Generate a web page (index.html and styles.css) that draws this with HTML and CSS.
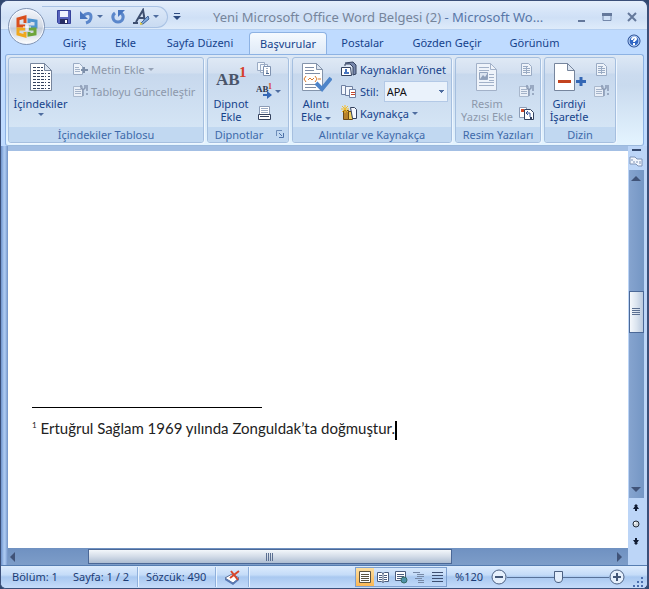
FILE: index.html
```
<!DOCTYPE html>
<html lang="tr">
<head>
    <meta charset="utf-8">
    <title>Yeni Microsoft Office Word Belgesi (2) - Microsoft Word</title>
    <link rel="stylesheet" href="styles.css">
</head>
<body>

<!-- shapes used more than once -->
<svg class="defs" aria-hidden="true">
    <symbol id="doc-small" viewBox="0 0 16 16">
        <path d="M3.500 2.500h7l3 3v9h-10z" fill="#eef3fa" stroke="#9aabc4"/>
        <path d="M5 5.500h5M5 7.500h7M5 9.500h7M5 11.500h7M8.500 5v8" stroke="#9aabc4"/>
    </symbol>
    <symbol id="doc-update" viewBox="0 0 16 16">
        <path d="M1.500 3.500h9v10h-9z" fill="#e9eff8" stroke="#a9b8cd"/>
        <path d="M3 6.500h6M3 8.500h6M3 10.500h6" stroke="#a4b3c9"/>
        <path d="M9 2v3l2 2v6M13 2v3l-2 2" fill="none" stroke="#8999b3" stroke-width="1.500"/>
        <path d="M15 2v6M15 10v2" stroke="#8999b3" stroke-width="1.500"/>
    </symbol>
</svg>

<div class="window">
    <header class="titlebar">
        <button class="office" aria-label="Office Düğmesi">
            <svg viewBox="0 0 24 24" width="24" height="24" fill="none" stroke-width="3">
                <path d="M10 11H3V4l7-2v6" stroke="#d94f1c"/>
                <path d="M14 8V5l7 1v6h-7" stroke="#4f94cf"/>
                <path d="M10 14H3v5l7 2v-4" stroke="#f0a81d"/>
                <path d="M14 17v3l6-1v-5h-6" stroke="#6da53a"/>
                <path d="M12 9v7M8 12h8" stroke="#fff" stroke-width="1"/>
            </svg>
        </button>
        <div class="quick">
            <button aria-label="Kaydet">
                <svg viewBox="0 0 16 16" width="16" height="16">
                    <path d="M1.500 1.500h13v13h-12l-1-1z" fill="#5763bd" stroke="#36429a"/>
                    <path d="M4 2h8v6H4z" fill="#eef3ff"/>
                    <path d="M4 10h8v5H4z" fill="#272d63"/>
                    <path d="M9 11h2v3H9z" fill="#fff"/>
                </svg>
            </button>
            <button aria-label="Geri Al">
                <svg viewBox="0 0 16 16" width="16" height="16">
                    <path d="M5 7c4-4 8-3 8 1 0 3-2 5-5 6" fill="none" stroke="#5b87cb" stroke-width="3"/>
                    <path d="M2 2v8h8z" fill="#4775bf"/>
                </svg>
            </button>
            <i class="arrow"></i>
            <button class="redo" aria-label="Yinele">
                <svg viewBox="0 0 16 16" width="16" height="16">
                    <path d="M11 4c4 3 2 9-3 9s-7-6-3-9" fill="none" stroke="#5b87cb" stroke-width="3"/>
                    <path d="M8 1h7L8 8z" fill="#4775bf"/>
                </svg>
            </button>
            <button class="styles" aria-label="Stiller">
                <svg viewBox="0 0 18 18" width="18" height="18">
                    <path d="M1 15h5M4 14L11 2l2 12M6 10h6" fill="none" stroke="#3e4f70" stroke-width="2"/>
                    <path d="M8 16l8-8 1 3-6 5z" fill="#7da6d9" stroke="#40649b"/>
                    <path d="M8 14l3 2-3 1z" fill="#e6cf4a"/>
                </svg>
            </button>
            <i class="arrow"></i>
        </div>
        <button class="customize" aria-label="Araç Çubuğunu Özelleştir">
            <svg viewBox="0 0 8 8" width="8" height="8"><path d="M1 0h6v1H1zM0 3h8L4 7z" fill="#2c4a80"/></svg>
        </button>
        <h1><span>Yeni Microsoft Office Word Belgesi (2)</span> - Microsoft Wo...</h1>
        <div class="controls">
            <button aria-label="Simge Durumuna Küçült"><svg viewBox="0 0 10 10" width="10" height="10"><path d="M1 8h7v2H1z" fill="#64789b"/></svg></button>
            <button aria-label="Ekranı Kapla"><svg viewBox="0 0 10 10" width="10" height="10"><path d="M1 2.500h8v6H1z" fill="none" stroke="#7589ab"/><path d="M0 1h10v3H0z" fill="#64789b"/></svg></button>
            <button aria-label="Kapat"><svg viewBox="0 0 10 10" width="10" height="10"><path d="M1 1l8 8M9 1L1 9" stroke="#64789b" stroke-width="2"/></svg></button>
        </div>
    </header>

    <nav class="tabs">
        <button>Giriş</button>
        <button>Ekle</button>
        <button>Sayfa Düzeni</button>
        <button class="active">Başvurular</button>
        <button>Postalar</button>
        <button>Gözden Geçir</button>
        <button>Görünüm</button>
        <button class="help" aria-label="Yardım">
            <svg viewBox="0 0 14 14" width="14" height="14">
                <circle cx="7" cy="7" r="6" fill="#2f66c4" stroke="#25488c"/>
                <circle cx="7" cy="7" r="5" fill="none" stroke="#cfe2fb"/>
                <path d="M5 6c0-3 4-3 4-1 0 1-2 1-2 3M7 9v2" fill="none" stroke="#fff" stroke-width="2"/>
            </svg>
        </button>
    </nav>

    <div class="ribbon">
        <section class="group toc">
            <div class="tools">
                <button class="big">
                    <svg viewBox="0 0 24 30" width="24" height="30">
                        <path d="M1.500 1.500h14l7 7v20h-21z" fill="#fff" stroke="#76859d"/>
                        <path d="M15.500 1.500v7h7z" fill="#dce5f1" stroke="#76859d"/>
                        <path d="M4 5.500h10M4 8.500h10M4 11.500h13M4 14.500h13M4 17.500h13M4 20.500h13M4 23.500h13M4 26.500h13" stroke="#35435f" stroke-dasharray="3 1"/>
                        <path d="M19 11.500h2M19 14.500h2M19 17.500h2M19 20.500h2M19 23.500h2M19 26.500h2" stroke="#35435f"/>
                    </svg>
                    <span>İçindekiler</span>
                    <i class="arrow"></i>
                </button>
                <div class="stack">
                    <button disabled>
                        <svg viewBox="0 0 16 16" width="16" height="16">
                            <path d="M1.500 2.500h6l3 3v8h-9z" fill="#eef3fa" stroke="#9aabc4"/>
                            <path d="M3 6.500h4M3 8.500h5M3 10.500h5" stroke="#a4b3c9"/>
                            <path d="M9 9h7M12 6v6M11 8v2" stroke="#7d8faa" stroke-width="2"/>
                        </svg>
                        Metin Ekle <i class="arrow"></i>
                    </button>
                    <button disabled><svg width="16" height="16"><use href="#doc-update"/></svg>Tabloyu Güncelleştir</button>
                </div>
            </div>
            <h2>İçindekiler Tablosu</h2>
        </section>

        <section class="group notes">
            <div class="tools">
                <button class="big">
                    <svg viewBox="0 0 32 30" width="32" height="30">
                        <text x="1" y="23" class="ab">AB</text>
                        <text x="24" y="15" class="one">1</text>
                    </svg>
                    <span>Dipnot<br>Ekle</span>
                </button>
                <div class="stack">
                    <button aria-label="Sonnot Ekle">
                        <svg viewBox="0 0 16 16" width="16" height="16">
                            <path d="M1.500 1.500h7v8h-7zM4.500 3.500h7v8h-7z" fill="#f4f8fd" stroke="#9aabc4"/>
                            <path d="M7.500 5.500h7v9h-7z" fill="#fff" stroke="#7f92b0"/>
                            <path d="M11 7v1M11 9v4M10 12.500h3" stroke="#4a668f"/>
                        </svg>
                    </button>
                    <button aria-label="Sonraki Dipnot">
                        <svg viewBox="0 0 16 16" width="16" height="16">
                            <text x="0" y="9" class="ab-small">AB</text>
                            <text x="12" y="6" class="one-small">1</text>
                            <path d="M7 11h4V8l5 4-5 4v-3H7z" fill="#3467b5"/>
                        </svg>
                        <i class="arrow"></i>
                    </button>
                    <button aria-label="Notları Göster">
                        <svg viewBox="0 0 16 16" width="16" height="16">
                            <path d="M3.500 1.500h10v8h-10z" fill="#fff" stroke="#8b9cb6"/>
                            <path d="M2.500 9.500h12v5h-12z" fill="#fff" stroke="#35435f"/>
                            <path d="M5 3.500h7M5 5.500h7M5 7.500h7" stroke="#9aabc4"/>
                            <path d="M4 11.500h9" stroke="#35435f"/>
                        </svg>
                    </button>
                </div>
            </div>
            <h2>Dipnotlar
                <button class="launcher" aria-label="Dipnot ve Sonnot">
                    <svg viewBox="0 0 8 8" width="8" height="8"><path d="M.5 6V.5H6" fill="none" stroke="#6d8db9"/><path d="M3 3l3 3M7.500 3v4.500H3" fill="none" stroke="#4c71a8"/></svg>
                </button>
            </h2>
        </section>

        <section class="group cites">
            <div class="tools">
                <button class="big">
                    <svg viewBox="0 0 32 30" width="32" height="30">
                        <path d="M2.500 1.500h14l6 6v21h-20z" fill="#fff" stroke="#8494ab"/>
                        <path d="M16.500 1.500v6h6z" fill="#dce5f1" stroke="#8494ab"/>
                        <path d="M5 5.500h9M5 8.500h9M5 11.500h15M5 22.500h12M5 25.500h11" stroke="#7e8da6"/>
                        <path d="M6 14l-2 3 2 3M8 18l2-2 2 2 2-2M15 14l2 3-2 3M18 17h3" fill="none" stroke="#d97a2b"/>
                        <path d="M16 21l6 6 9-11" fill="none" stroke="#4d84c9" stroke-width="4"/>
                    </svg>
                    <span>Alıntı<br>Ekle <i class="arrow"></i></span>
                </button>
                <div class="stack">
                    <button>
                        <svg viewBox="0 0 16 16" width="16" height="16">
                            <path d="M4 2l8-1 3 3v9l-3 1" fill="#7787ab" stroke="#34425f"/>
                            <path d="M4 5V3h5l3 3v8" fill="#dce6f5" stroke="#34425f"/>
                            <path d="M.5 6.500h9l1 8h-10z" fill="#fff" stroke="#34425f"/>
                            <path d="M3 12h5M5 8v4" stroke="#4775bf" stroke-width="2"/>
                        </svg>
                        Kaynakları Yönet
                    </button>
                    <div class="style">
                        <svg viewBox="0 0 16 16" width="16" height="16">
                            <path d="M.5 2.500h4v9h-4zM4.500 3.500h7v9h-7z" fill="#f2f6fc" stroke="#6f80a2"/>
                            <path d="M8.500 6.500h6v8h-6z" fill="#fff" stroke="#6f80a2"/>
                            <path d="M10 9.500h4M10 11.500h4" stroke="#c4472d"/>
                        </svg>
                        <label for="style">Stil:</label>
                        <select id="style"><option>APA</option></select>
                    </div>
                    <button>
                        <svg viewBox="0 0 16 16" width="16" height="16">
                            <path d="M2.500 5.500h5v9h-5z" fill="#b9832c" stroke="#6d4b18"/>
                            <path d="M7.500 6.500h4v8h-4z" fill="#f2cf5b" stroke="#6d4b18"/>
                            <path d="M9.500 2.500h4l2 2v9h-4z" fill="#f5f8ff" stroke="#34425f"/>
                            <path d="M4 0v8M0 4h8M1 1l6 6M7 1L1 7" stroke="#f3bd2b"/>
                        </svg>
                        Kaynakça <i class="arrow"></i>
                    </button>
                </div>
            </div>
            <h2>Alıntılar ve Kaynakça</h2>
        </section>

        <section class="group captions">
            <div class="tools">
                <button class="big" disabled>
                    <svg viewBox="0 0 24 30" width="24" height="30">
                        <path d="M1.500 1.500h14l6 6v21h-20z" fill="#eef3fa" stroke="#a2b1c8"/>
                        <path d="M15.500 1.500v6h6" fill="none" stroke="#a2b1c8"/>
                        <path d="M4 5.500h10M4 8.500h10M4 20.500h15M4 23.500h15M14 12.500h5M14 15.500h5M14 18.500h5" stroke="#a2b1c8"/>
                        <path d="M4.500 10.500h8v7h-8z" fill="#dbe4f0" stroke="#93a4be"/>
                        <path d="M5 17l3-4 2 2 2-3v5z" fill="#8e9fb9"/>
                    </svg>
                    <span>Resim<br>Yazısı Ekle</span>
                </button>
                <div class="stack">
                    <button disabled aria-label="Şekiller Tablosu Ekle"><svg width="16" height="16"><use href="#doc-small"/></svg></button>
                    <button disabled aria-label="Şekil Tablosunu Güncelleştir"><svg width="16" height="16"><use href="#doc-update"/></svg></button>
                    <button aria-label="Çapraz Başvuru">
                        <svg viewBox="0 0 16 16" width="16" height="16">
                            <path d="M1.500 2.500h7v10h-7z" fill="#fff" stroke="#8b9cb6"/>
                            <path d="M6.500 4.500h6l3 3v7h-9z" fill="#fff" stroke="#34425f"/>
                            <path d="M3 4h3v3H3z" fill="#d2492a"/>
                            <path d="M12 12V8H8M10 6L8 8l2 2" fill="none" stroke="#34549a"/>
                            <path d="M12 12h2v2h-2z" fill="#34425f"/>
                        </svg>
                    </button>
                </div>
            </div>
            <h2>Resim Yazıları</h2>
        </section>

        <section class="group index">
            <div class="tools">
                <button class="big">
                    <svg viewBox="0 0 34 30" width="34" height="30">
                        <path d="M2.500 1.500h13l7 7v20h-20z" fill="#fff" stroke="#76859d"/>
                        <path d="M15.500 1.500v7h7z" fill="#dce5f1" stroke="#76859d"/>
                        <path d="M6 18h13v3H6z" fill="#c3431f"/>
                        <path d="M29 15v9M24 19.500h10" stroke="#3467b5" stroke-width="3"/>
                    </svg>
                    <span>Girdiyi<br>İşaretle</span>
                </button>
                <div class="stack">
                    <button disabled aria-label="Dizin Ekle"><svg width="16" height="16"><use href="#doc-small"/></svg></button>
                    <button disabled aria-label="Dizini Güncelleştir"><svg width="16" height="16"><use href="#doc-update"/></svg></button>
                </div>
            </div>
            <h2>Dizin</h2>
        </section>
    </div>

    <main class="workspace">
        <article class="page">
            <hr>
            <p><sup>1</sup> Ertuğrul Sağlam 1969 yılında Zonguldak’ta doğmuştur.<span class="caret"></span></p>
        </article>
        <div class="vscroll">
            <div class="split"></div>
            <button class="ruler" aria-label="Cetvel">
                <svg viewBox="0 0 14 14" width="14" height="14">
                    <path d="M1 3h5l2 2h5v7H9l-2-2H1z" fill="#f2f6fd" stroke="#7e93b6"/>
                    <path d="M3 5v2M5 7v2M8 7v2M11 7v3" stroke="#7e93b6"/>
                </svg>
            </button>
            <div class="track">
                <button aria-label="Yukarı"><svg viewBox="0 0 10 6" width="10" height="6"><path d="M0 6l5-5 5 5z" fill="#405378"/></svg></button>
                <div class="thumb"></div>
                <button aria-label="Aşağı"><svg viewBox="0 0 10 6" width="10" height="6"><path d="M0 0l5 5 5-5z" fill="#405378"/></svg></button>
            </div>
            <div class="browse">
                <button aria-label="Önceki Sayfa"><svg viewBox="0 0 8 8" width="8" height="8"><path d="M4 1l2 2H5l2 3H5v2H3V6H1l2-3H2z" fill="#111c33"/></svg></button>
                <button aria-label="Gözat"><svg viewBox="0 0 8 8" width="8" height="8"><circle cx="4" cy="4" r="3" fill="#cfd6da" stroke="#222b38"/><circle cx="3" cy="3" r="1" fill="#fff"/></svg></button>
                <button aria-label="Sonraki Sayfa"><svg viewBox="0 0 8 8" width="8" height="8"><path d="M4 8L2 6h1L1 3h2V1h2v2h2L5 6h1z" fill="#111c33"/></svg></button>
            </div>
        </div>
        <div class="hscroll">
            <button aria-label="Sola"><svg viewBox="0 0 6 10" width="6" height="10"><path d="M5 0v10L0 5z" fill="#405378"/></svg></button>
            <div class="thumb"></div>
            <button aria-label="Sağa"><svg viewBox="0 0 6 10" width="6" height="10"><path d="M1 0v10l5-5z" fill="#405378"/></svg></button>
        </div>
    </main>

    <footer class="status">
        <span class="section">Bölüm: 1</span>
        <span class="pages">Sayfa: 1 / 2</span>
        <span class="words">Sözcük: 490</span>
        <span class="proof">
            <svg viewBox="0 0 16 16" width="16" height="16">
                <path d="M1 9l7-4 7 4-6 5z" fill="#fff" stroke="#5b6f96"/>
                <path d="M1 9v2l8 5 6-5V9l-6 5z" fill="#5778b4"/>
                <path d="M7 2l7 9M15 2L6 9" stroke="#d9472b" stroke-width="2"/>
            </svg>
        </span>
        <div class="views">
            <button class="on" aria-label="Sayfa Düzeni">
                <svg viewBox="0 0 14 14" width="14" height="14"><path d="M1.500 1.500h11v11h-11z" fill="#fff" stroke="#5b5340"/><path d="M3 4.500h8M3 6.500h8M3 8.500h8M3 10.500h8" stroke="#5b5340"/></svg>
            </button>
            <button aria-label="Tam Ekran Okuma">
                <svg viewBox="0 0 14 14" width="14" height="14"><path d="M1.500 2.500h4l1.500 1 1.500-1h4v9h-4l-1.500 1-1.500-1h-4z" fill="#fff" stroke="#4a5c7d"/><path d="M7 3v9M3 5.500h3M3 7.500h3M3 9.500h3M8 5.500h3M8 7.500h3M8 9.500h3" stroke="#4a5c7d"/></svg>
            </button>
            <button aria-label="Web Düzeni">
                <svg viewBox="0 0 14 14" width="14" height="14"><path d="M1.500 1.500h10v9h-10z" fill="#fff" stroke="#4a5c7d"/><path d="M3 4.500h7M3 6.500h7M3 8.500h4" stroke="#4a5c7d"/><circle cx="10" cy="10" r="3" fill="#4d92a8" stroke="#356b64"/></svg>
            </button>
            <button aria-label="Anahat">
                <svg viewBox="0 0 14 14" width="14" height="14"><path d="M1 2.500h7M5 4.500h7M5 6.500h7M3 8.500h7M6 10.500h6M6 12.500h6" stroke="#7688a6"/></svg>
            </button>
            <button aria-label="Taslak">
                <svg viewBox="0 0 14 14" width="14" height="14"><path d="M2 2.500h11M2 5.500h11M2 8.500h11M2 11.500h11" stroke="#3e5072"/></svg>
            </button>
        </div>
        <span class="percent">%120</span>
        <div class="zoom">
            <button aria-label="Uzaklaştır"><svg viewBox="0 0 16 16" width="16" height="16"><circle cx="8" cy="8" r="7" fill="#e6f0fc" stroke="#4c6183"/><path d="M4 8h8" stroke="#445777" stroke-width="2"/></svg></button>
            <input type="range" min="0" max="100" value="50" aria-label="Yakınlaştırma">
            <button aria-label="Yakınlaştır"><svg viewBox="0 0 16 16" width="16" height="16"><circle cx="8" cy="8" r="7" fill="#e6f0fc" stroke="#4c6183"/><path d="M4 8h8M8 4v8" stroke="#445777" stroke-width="2"/></svg></button>
        </div>
        <svg class="grip" viewBox="0 0 12 12" width="12" height="12"><path d="M9 1h2v2H9zM5 5h2v2H5zM9 5h2v2H9zM1 9h2v2H1zM5 9h2v2H5zM9 9h2v2H9z" fill="#4c6fae"/></svg>
    </footer>
</div>

</body>
</html>
```
FILE: styles.css
```
* {
    box-sizing: border-box;
}

body {
    margin: 0;
    background: #31486f;
    font-family: "Noto Sans", sans-serif;
    font-size: 11px;
    color: #15428b;
}

button {
    display: flex;
    align-items: center;
    padding: 0;
    border: none;
    background: none;
    font: inherit;
    color: inherit;
    white-space: nowrap;
}

button:disabled {
    color: #8c98ab;
}

svg {
    display: block;
    flex: none;
}

.defs {
    position: absolute;
    width: 0;
    height: 0;
}

.arrow {
    display: inline-block;
    flex: none;
    border: 3px solid transparent;
    border-top-color: #4f6d9f;
    border-bottom: none;
    vertical-align: middle;
}

button:disabled .arrow {
    border-top-color: #95a2b6;
}

.window {
    display: flex;
    flex-direction: column;
    height: 100vh;
    border: 1px solid #3b4f79;
    border-width: 1px 2px 1px 1px;
    border-radius: 8px 8px 6px 6px;
    background: #bfdbff;
    overflow: hidden;
}

/* title bar */
.titlebar {
    position: relative;
    display: flex;
    align-items: center;
    height: 29px;
    padding-left: 41px;
    background: linear-gradient(#e6effb, #d5e4f8 40%, #cfe0f6 60%, #deebfa);
    border-bottom: 1px solid #b5cff0;
}

.office {
    position: absolute;
    left: 7px;
    top: 7px;
    z-index: 1;
    justify-content: center;
    width: 37px;
    height: 37px;
    border: 1px solid #8194b3;
    border-radius: 50%;
    background: linear-gradient(#f4f6fa, #d3dae5 50%, #c3ccda 55%, #fff);
    box-shadow: inset 0 0 0 1px #f4f8ff;
}

.quick {
    display: flex;
    flex: none;
    align-items: center;
    width: 126px;
    height: 22px;
    padding-left: 14px;
    margin-top: 3px;
    border: 1px solid #a9c2e4;
    border-left: none;
    border-radius: 0 11px 11px 0;
    background: linear-gradient(#dce8f8, #c9dbf2);
}

.quick button + button {
    margin-left: 6px;
}

.quick .arrow {
    margin-left: 3px;
}

.quick .redo {
    margin-left: 7px;
}

.customize {
    margin: 3px 0 0 5px;
}

.titlebar h1 {
    flex: 1;
    margin: 3px 0 0;
    padding-left: 32px;
    overflow: hidden;
    font-size: 13px;
    font-weight: 400;
    line-height: 20px;
    white-space: nowrap;
    color: #5877a8;
}

.titlebar h1 span {
    color: #76859b;
}

.controls {
    display: flex;
    gap: 15px;
    margin: 3px 10px 0 0;
}

/* tabs */
.tabs {
    display: grid;
    grid-template-columns: 51px 51px 98px 78px 71px 98px 77px 1fr;
    height: 24px;
    padding-left: 48px;
}

.tabs button {
    justify-content: center;
    padding-bottom: 1px;
    margin-top: 2px;
}

.tabs .active {
    border: 1px solid #8db2e3;
    border-bottom: none;
    border-radius: 4px 4px 0 0;
    background: linear-gradient(#f5faff, #dfeaf7);
}

.tabs .help {
    justify-content: flex-end;
    padding: 0 6px 2px 0;
    margin-top: 0;
}

/* ribbon */
.ribbon {
    display: flex;
    gap: 3px;
    height: 92px;
    padding: 2px;
    margin: 0 3px 0 4px;
    border: 1px solid #8db2e3;
    border-bottom-color: #9bb9dd;
    border-radius: 3px;
    background: linear-gradient(#dde8f5, #cbdbef 20px, #c9daee 30px, #e4f4ff);
}

.group {
    display: flex;
    flex-direction: column;
    height: 86px;
    border: 1px solid #a5bfdf;
    border-radius: 3px;
    box-shadow: 1px 1px #eef6ff;
    background: linear-gradient(#dfe9f5, #d2dff0 15px, #c7d8ed 16px, #d8e8f7);
    overflow: hidden;
}

.toc { width: 196px; }
.notes { width: 82px; }
.cites { width: 160px; }
.captions { width: 86px; }
.index { width: 72px; }

.group h2 {
    position: relative;
    margin: 0;
    font-size: 11px;
    font-weight: 400;
    line-height: 15px;
    text-align: center;
    color: #3e6aaa;
    background: #c1d8f1;
}

.notes h2 {
    padding-right: 18px;
}

.launcher {
    position: absolute;
    right: 4px;
    top: 3px;
}

.tools {
    display: flex;
    flex: 1;
}

.big {
    flex-direction: column;
    width: 63px;
    padding-top: 4px;
    line-height: 13px;
    text-align: center;
}

.big > span {
    margin-top: 5px;
}

.big > .arrow {
    margin-top: 3px;
}

.notes .big,
.cites .big {
    width: 46px;
    margin-right: 2px;
}

.captions .big {
    width: 62px;
}

.index .big {
    width: 48px;
}

.ab {
    font: bold 17px "Liberation Serif", serif;
    fill: #4a556a;
}

.one {
    font: bold 15px "Liberation Serif", serif;
    fill: #d63f2b;
}

.ab-small {
    font: bold 9px "Liberation Serif", serif;
    fill: #2c3750;
}

.one-small {
    font: bold 8px "Liberation Serif", serif;
    fill: #d63f2b;
}

.stack {
    display: flex;
    flex-direction: column;
}

.stack > * {
    gap: 3px;
    height: 22px;
}

.style {
    display: flex;
    align-items: center;
}

.style select {
    width: 64px;
    height: 21px;
    padding: 0 4px 0 2px;
    margin-left: 2px;
    appearance: none;
    border: 1px solid #b3c9e6;
    border-radius: 0;
    background: linear-gradient(#4f6d9f, #4f6d9f) 54px 8px / 5px 1px no-repeat, linear-gradient(#4f6d9f, #4f6d9f) 55px 9px / 3px 1px no-repeat, linear-gradient(#4f6d9f, #4f6d9f) 56px 10px / 1px 1px no-repeat, #eaf2fb;
    font: inherit;
    color: #111;
}

/* document */
.workspace {
    display: grid;
    grid-template-columns: 1fr 19px;
    grid-template-rows: 1fr 17px;
    flex: 1;
    min-height: 0;
    padding-left: 7px;
    background: linear-gradient(90deg, #6f94cd 0, #a9c7f0 3px, #a9c7f0 4px, #7091c5 7px);
}

.page {
    padding: 256px 24px 0;
    border-top: 5px solid #a3bfe4;
    background: #fff;
}

.page hr {
    width: 230px;
    height: 1px;
    margin: 0;
    border: none;
    background: #000;
}

.page p {
    margin: 10px 0 0;
    font-family: Lato, sans-serif;
    font-size: 15px;
    line-height: 20px;
    color: #222;
}

.page sup {
    font-size: 8px;
    line-height: 0;
}

.caret {
    display: inline-block;
    width: 2px;
    height: 19px;
    background: #000;
    vertical-align: middle;
}

.vscroll {
    display: flex;
    flex-direction: column;
    align-items: center;
    grid-row: 1 / 3;
    grid-column: 2;
    padding-right: 3px;
    background: #bcd5f7;
}

.split {
    width: 9px;
    height: 2px;
    margin-top: 3px;
    background: #34496f;
}

.ruler {
    height: 19px;
}

.track {
    display: flex;
    flex: 1;
    flex-direction: column;
    align-items: center;
    width: 15px;
    background: linear-gradient(90deg, #86a4cf, #7496c4);
}

.track button {
    height: 16px;
}

.vscroll .thumb,
.hscroll .thumb {
    display: flex;
    align-items: center;
    justify-content: center;
    border: 1px solid #4b6897;
}

.vscroll .thumb {
    width: 15px;
    height: 42px;
    margin-top: 105px;
    margin-bottom: auto;
    background: linear-gradient(90deg, #f5f8fc, #dbe4ef 50%, #b9c9de);
}

.vscroll .thumb::before {
    content: "";
    width: 8px;
    height: 8px;
    background: repeating-linear-gradient(#5b6f91 0 1px, transparent 1px 2px);
}

.browse {
    display: flex;
    flex-direction: column;
    gap: 9px;
    padding: 5px 1px 20px 0;
}

.hscroll {
    display: flex;
    align-items: center;
    padding: 0 6px 0 2px;
    background: linear-gradient(#6f91c1, #7d9dc9);
}

.hscroll .thumb {
    flex: 1;
    height: 15px;
    margin: 0 164px 0 72px;
    background: linear-gradient(#f3f7fb, #d3dce8 50%, #adbdd2);
}

.hscroll .thumb::before {
    content: "";
    width: 8px;
    height: 8px;
    background: repeating-linear-gradient(90deg, #5b6f91 0 1px, transparent 1px 2px);
}

/* status bar */
.status {
    display: flex;
    align-items: center;
    height: 23px;
    padding: 0 3px 0 11px;
    border-top: 1px solid #567db1;
    background: linear-gradient(#dcebfd, #c5dcf8 40%, #a9c8f0 50%, #c5dcfa);
    color: #1c3c75;
    white-space: nowrap;
}

.status > span {
    line-height: 20px;
}

.section {
    width: 61px;
}

.pages {
    width: 65px;
}

.words {
    width: 78px;
    padding-left: 8px;
}

.proof {
    width: 33px;
    padding: 2px 8px;
}

.pages,
.words,
.proof {
    border-right: 1px solid #8fb0dc;
    box-shadow: 1px 0 #eaf4ff;
}

.views {
    display: flex;
    margin-left: auto;
    border: 1px solid #7d9fce;
}

.views button {
    justify-content: center;
    width: 18px;
    height: 18px;
}

.views .on {
    background: linear-gradient(#fddfa0, #fbb754);
}

.percent {
    width: 44px;
    padding-left: 8px;
}

.zoom {
    display: flex;
    align-items: center;
}

.zoom input {
    width: 102px;
    height: 16px;
    margin: 0;
    appearance: none;
    background: linear-gradient(#587299, #587299) center / 100% 1px no-repeat;
}

.zoom input::-webkit-slider-thumb {
    appearance: none;
    width: 9px;
    height: 12px;
    border: 1px solid #4c6183;
    border-radius: 1px 1px 5px 5px;
    background: #e2edfb;
}

.grip {
    align-self: flex-end;
    margin-left: 7px;
}
```
